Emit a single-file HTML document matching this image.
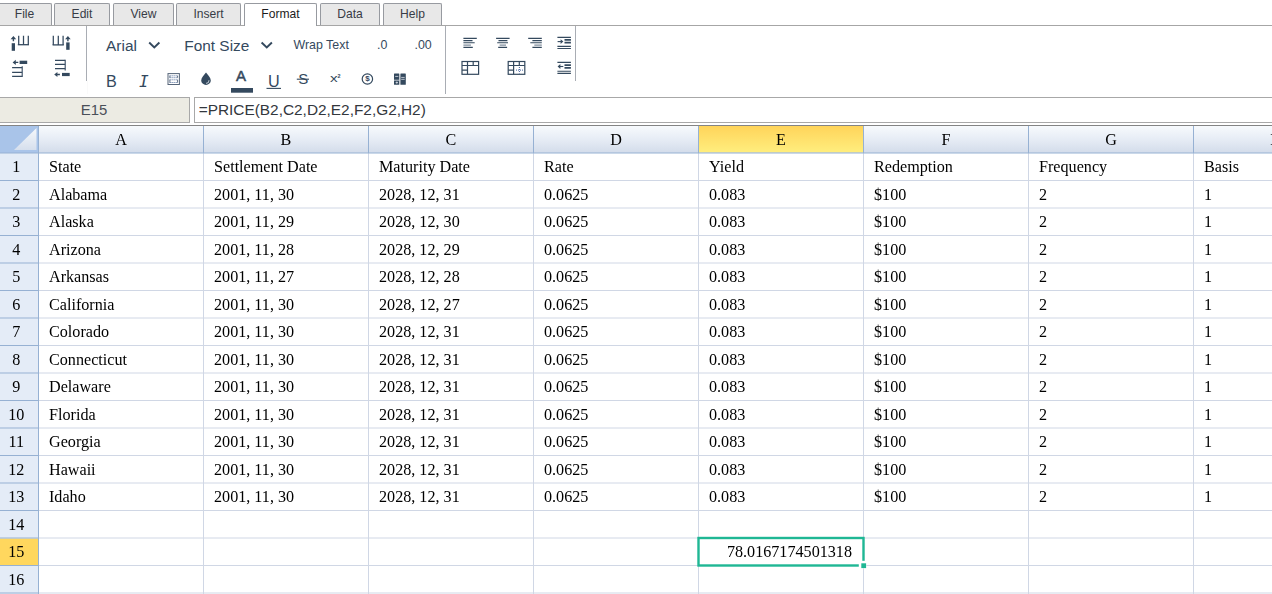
<!DOCTYPE html>
<html><head><meta charset="utf-8"><title>Spreadsheet</title>
<style>
html,body{margin:0;padding:0;background:#fff;}
body{width:1272px;height:594px;overflow:hidden;position:relative;font-family:"Liberation Sans",sans-serif;color:#34495e;}
.tab{position:absolute;top:3px;height:23px;box-sizing:border-box;border:1px solid #979aa0;border-bottom:none;border-radius:2px 2px 0 0;background:#e8e8e8;font-size:12.1px;line-height:20px;text-align:center;color:#383c46;}
.tab.on{background:#fff;color:#1c1c1c;z-index:2;}
.tabline{position:absolute;left:0;top:25px;width:1272px;height:1px;background:#a6a6a6;}
.sep{position:absolute;width:1px;background:#a9adb4;top:26px;}
.tx{position:absolute;white-space:pre;line-height:1;}
.ic{position:absolute;overflow:visible;}
.namebox{position:absolute;left:-2px;top:97px;width:192px;height:26px;box-sizing:border-box;border:1px solid #a8a8a8;background:#ecebe3;font-size:14.9px;text-align:center;line-height:24px;color:#4a4f58;}
.fx{position:absolute;left:194px;top:97px;width:1090px;height:26px;box-sizing:border-box;border:1px solid #a8a8a8;background:#fff;font-size:15.4px;line-height:24px;padding-left:3.7px;color:#33373d;white-space:pre;}
.grid{position:absolute;left:0;top:125px;will-change:transform;}
.grid .t{font-family:"Liberation Serif",serif;font-size:16.15px;fill:#000;}
</style></head><body>
<div class="tab" style="left:-3px;width:55px">File</div><div class="tab" style="left:54px;width:56px">Edit</div><div class="tab" style="left:113px;width:61px">View</div><div class="tab" style="left:176px;width:65px">Insert</div><div class="tab on" style="left:244px;width:73px">Format</div><div class="tab" style="left:320px;width:60px">Data</div><div class="tab" style="left:383px;width:59px">Help</div>
<div class="tabline"></div>
<div class="sep" style="left:86px;height:55px"></div>
<div class="sep" style="left:445px;height:68px"></div>
<div class="sep" style="left:575px;height:55px"></div>
<div class="sep" style="left:87px;top:81px;height:13px;background:#fafafa"></div>
<!-- toolbar text -->
<div class="tx" style="left:106.1px;top:37.8px;font-size:15.4px">Arial</div>
<div class="tx" style="left:184.3px;top:37.8px;font-size:15.4px">Font Size</div>
<div class="tx" style="left:293.5px;top:39px;font-size:12.4px">Wrap Text</div>
<div class="tx" style="left:377px;top:39px;font-size:12.4px">.0</div>
<div class="tx" style="left:414.5px;top:39px;font-size:12.4px">.00</div>
<div class="tx" style="left:106px;top:72.7px;font-size:16.2px">B</div>
<div class="tx" style="left:139px;top:74.1px;font-size:16.2px;font-family:'DejaVu Sans Mono',monospace;font-style:italic">I</div>
<div class="tx" style="left:236px;top:68.3px;font-size:15px;-webkit-text-stroke:0.5px #34495e">A</div>
<div class="tx" style="left:267.9px;top:72.7px;font-size:16.2px">U</div>
<div class="tx" style="left:298.3px;top:70.7px;font-size:15px">S</div>
<div class="tx" style="left:330px;top:72.3px;font-size:11.6px;transform:scaleX(1.32);transform-origin:0 0">x</div>
<div class="tx" style="left:337.4px;top:73.5px;font-size:5.4px;font-weight:bold">2</div>
<div class="tx" style="left:365.2px;top:75.3px;font-size:8px;font-weight:bold">$</div>
<svg class="ic" style="left:0;top:0" width="600" height="97" viewBox="0 0 600 97" fill="none" stroke="#34495e">
 <!-- group 1: row/col insert/delete icons -->
 <g stroke-width="1">
  <path d="M18.7 35.7V44.7M23.5 35.7V44.7M28.3 35.7V44.7" stroke="#34495e" stroke-width="1.25"/>
  <path d="M17.8 44.7H29" stroke-width="1.3"/>
  <path d="M53.3 35.7V44.9M58.3 35.7V44.9M63.1 35.7V44.9" stroke="#34495e" stroke-width="1.25"/>
  <path d="M52.6 44.9H63.8" stroke-width="1.3"/>
  <path d="M12.1 67.7H22.2M12.1 72.4H22.2M12.1 76.3H22.2" stroke-width="1.2"/>
  <path d="M22.2 66.3V76.9" stroke="#3d5167" stroke-width="1.15"/>
  <path d="M55 60.3H65.2M55 64.4H65.2M55 68.6H65.2" stroke-width="1.2"/>
  <path d="M65.2 59.8V70.6" stroke="#3d5167" stroke-width="1.15"/>
 </g>
 <g fill="#34495e" stroke="none">
  <rect x="11.7" y="43.2" width="3.3" height="7.6"/>
  <path d="M13.4 36 L16.2 39.2 H14.1 V41.2 H12.7 V39.2 H10.6 Z"/>
  <rect x="66.2" y="42.4" width="3.4" height="7.4"/>
  <path d="M67.9 36 L70.7 39.2 H68.6 V41.2 H67.2 V39.2 H65.1 Z"/>
  <rect x="19.6" y="60.7" width="7.6" height="3.3"/>
  <path d="M12.6 62.4 L15.8 59.8 V61.7 H18.3 V63.1 H15.8 V65 Z"/>
  <rect x="62" y="72.9" width="7.7" height="3.2"/>
  <path d="M54.2 74.5 L57.4 71.9 V73.8 H59.9 V75.2 H57.4 V77.1 Z"/>
 </g>
 <!-- chevrons -->
 <path d="M149.2 42.5L154.3 47.5L159.4 42.5" stroke-width="1.9"/>
 <path d="M261.6 42.5L266.75 47.5L271.9 42.5" stroke-width="1.9"/>
 <!-- border icon -->
 <rect x="168" y="73.6" width="11.4" height="10.9" stroke="#566579" stroke-width="1"/>
 <path d="M169.6 75.8H178M169.6 77.7H178M169.6 79.8H178M169.6 82.5H178" stroke="#4d6a9a" stroke-width="0.9" stroke-dasharray="1.1 0.9"/>
 <path d="M169.9 75.8V77.7M177.6 75.8V77.7M169.9 79.8V82.5M177.6 79.8V82.5" stroke="#53647a" stroke-width="0.9"/>
 <!-- drop -->
 <path d="M206 72.6C207.6 75 210.8 77.6 210.8 80.4A4.8 4.5 0 0 1 201.2 80.4C201.2 77.6 204.4 75 206 72.6Z" fill="#34495e" stroke="none"/>
 <path d="M206 83.4A3 3 0 0 0 209 80.2" stroke="#e8edf2" stroke-width="0.8"/>
 <!-- A colour bar -->
 <rect x="231" y="88" width="22" height="4.7" fill="#34495e" stroke="none"/>
 <!-- U underline -->
 <path d="M266.5 88.4H281" stroke-width="1.1"/>
 <!-- S strike -->
 <path d="M296.8 79.2H309" stroke-width="1.1"/>
 <!-- $ circle -->
 <circle cx="367.4" cy="79" r="5.2" stroke-width="1.2"/>
 <!-- table style icon -->
 <g fill="#34495e" stroke="none">
  <rect x="394" y="73.6" width="5.3" height="11.2" rx="0.5"/>
  <rect x="400.4" y="73.6" width="5.4" height="11.2" rx="0.5"/>
 </g>
 <path d="M395.2 76.4H398.3M401.2 77.4H404.7M401.2 79.3H404.7M395.6 82.6H398M396.8 81.5V83.7" stroke="#dfe5ec" stroke-width="0.8"/>
 <path d="M394 80.2H399.3" stroke="#fff" stroke-width="0.7"/>
 <!-- align left -->
 <g stroke-width="1.1">
  <path d="M463.4 38.4H476.8M463.4 40.6H472.5M463.4 42.7H474.7M463.4 47.4H472.8"/>
  <path d="M463.4 45.1H470.9" stroke="#6f7d8e"/>
  <path d="M496.1 38.4H509.6M498.5 40.6H507.4M497.2 42.7H508M498.2 47.4H507.1"/>
  <path d="M499.6 45.1H506" stroke="#6f7d8e"/>
  <path d="M528.2 38.4H541.8M532.4 40.6H541.8M530.3 42.7H541.8M532.4 47.4H541.8"/>
  <path d="M534.3 45.1H541.8" stroke="#6f7d8e"/>
 </g>
 <!-- indent increase -->
 <g stroke-width="1.1">
  <path d="M557.4 37.4H570.9M557.4 46.4H570.9M557.4 48.5H570.9"/>
  <path d="M564.5 39.9H570.9M564.5 42.6H570.9" stroke-width="1.7"/>
  <path d="M557.6 41.6H561.5"/>
  <path d="M557.4 62.4H570.9M557.4 71.2H570.9M557.4 73.4H570.9"/>
  <path d="M564.5 65.1H570.9M564.5 67.9H570.9" stroke-width="1.7"/>
  <path d="M559.5 66.5H563.3"/>
 </g>
 <path d="M563.4 41.6L560.6 39.2V44Z" fill="#34495e" stroke="none"/>
 <path d="M557.6 66.5L560.4 64.1V68.9Z" fill="#34495e" stroke="none"/>
 <!-- table icon 1 -->
 <g stroke-width="1.2">
  <rect x="462" y="61.5" width="16.6" height="12.8"/>
  <path d="M462 65.5H478.6M467.5 61.5V74.3M473.2 61.5V65.5M462 70.1H467.5"/>
  <rect x="508.2" y="61.5" width="16.6" height="12.8"/>
  <path d="M508.2 65.5H524.8M513.6 61.5V74.3M519.3 61.5V65.5M508.2 70.1H513.6"/>
  <path d="M516 70.1H523.4M519.4 67V73.4" stroke="#3f5f9a" stroke-width="1" stroke-dasharray="1 1"/>
 </g>
</svg>

<div class="namebox">E15</div>
<div class="fx">=PRICE(B2,C2,D2,E2,F2,G2,H2)</div>
<svg class="grid" width="1272" height="469" viewBox="0 125 1272 469">
<defs><linearGradient id="hg" x1="0" y1="0" x2="0" y2="1"><stop offset="0" stop-color="#f7fafd"/><stop offset="0.5" stop-color="#e6ecf5"/><stop offset="1" stop-color="#d3dcea"/></linearGradient><linearGradient id="sg" x1="0" y1="0" x2="0" y2="1"><stop offset="0" stop-color="#ffd45a"/><stop offset="1" stop-color="#ffee7e"/></linearGradient><linearGradient id="tg" x1="0" y1="0" x2="0" y2="1"><stop offset="0" stop-color="#f5f8fb"/><stop offset="1" stop-color="#d6dfed"/></linearGradient></defs>
<rect x="0" y="125" width="1272" height="469" fill="#fff"/>
<rect x="0" y="126" width="1272" height="27" fill="url(#hg)"/>
<rect x="699.0" y="126" width="164" height="26.5" fill="url(#sg)"/>
<rect x="0" y="153" width="38.5" height="441" fill="#e4ecf7"/>
<rect x="0" y="538.5" width="38.0" height="26.5" fill="#ffd75e"/>
<rect x="0" y="126" width="38.5" height="27" fill="#a9c4e9"/>
<path d="M36.5 128 L36.5 150 L14 150 Z" fill="url(#tg)"/>
<path d="M38.5 180.5H1272M38.5 208.0H1272M38.5 235.5H1272M38.5 263.0H1272M38.5 290.5H1272M38.5 318.0H1272M38.5 345.5H1272M38.5 373.0H1272M38.5 400.5H1272M38.5 428.0H1272M38.5 455.5H1272M38.5 483.0H1272M38.5 510.5H1272M38.5 538.0H1272M38.5 565.5H1272M38.5 593.0H1272M203.5 153V594M368.5 153V594M533.5 153V594M698.5 153V594M863.5 153V594M1028.5 153V594M1193.5 153V594" stroke="#d0d7e5" stroke-width="1" fill="none"/>
<path d="M0 153H1272M38.5 126V153M203.5 126V153M368.5 126V153M533.5 126V153M698.5 126V153M863.5 126V153M1028.5 126V153M1193.5 126V153M38.5 153V594M0 180.5H38.5M0 208.0H38.5M0 235.5H38.5M0 263.0H38.5M0 290.5H38.5M0 318.0H38.5M0 345.5H38.5M0 373.0H38.5M0 400.5H38.5M0 428.0H38.5M0 455.5H38.5M0 483.0H38.5M0 510.5H38.5M0 538.0H38.5M0 565.5H38.5M0 593.0H38.5" stroke="#96b1d3" stroke-width="1" fill="none"/>
<rect x="0" y="125" width="1272" height="1" fill="#848484"/>
<g class="t" text-anchor="middle">
<text x="121.0" y="145">A</text>
<text x="286.0" y="145">B</text>
<text x="451.0" y="145">C</text>
<text x="616.0" y="145">D</text>
<text x="781.0" y="145">E</text>
<text x="946.0" y="145">F</text>
<text x="1111.0" y="145">G</text>
<text x="1276.0" y="145">H</text>
<text x="16.3" y="172">1</text>
<text x="16.3" y="200">2</text>
<text x="16.3" y="227">3</text>
<text x="16.3" y="255">4</text>
<text x="16.3" y="282">5</text>
<text x="16.3" y="310">6</text>
<text x="16.3" y="337">7</text>
<text x="16.3" y="365">8</text>
<text x="16.3" y="392">9</text>
<text x="16.3" y="420">10</text>
<text x="16.3" y="447">11</text>
<text x="16.3" y="475">12</text>
<text x="16.3" y="502">13</text>
<text x="16.3" y="530">14</text>
<text x="16.3" y="557">15</text>
<text x="16.3" y="585">16</text>
</g>
<g class="t">
<text x="49.0" y="172">State</text>
<text x="214.0" y="172">Settlement Date</text>
<text x="379.0" y="172">Maturity Date</text>
<text x="544.0" y="172">Rate</text>
<text x="709.0" y="172">Yield</text>
<text x="874.0" y="172">Redemption</text>
<text x="1039.0" y="172">Frequency</text>
<text x="1204.0" y="172">Basis</text>
<text x="49.0" y="200">Alabama</text>
<text x="214.0" y="200">2001, 11, 30</text>
<text x="379.0" y="200">2028, 12, 31</text>
<text x="544.0" y="200">0.0625</text>
<text x="709.0" y="200">0.083</text>
<text x="874.0" y="200">$100</text>
<text x="1039.0" y="200">2</text>
<text x="1204.0" y="200">1</text>
<text x="49.0" y="227">Alaska</text>
<text x="214.0" y="227">2001, 11, 29</text>
<text x="379.0" y="227">2028, 12, 30</text>
<text x="544.0" y="227">0.0625</text>
<text x="709.0" y="227">0.083</text>
<text x="874.0" y="227">$100</text>
<text x="1039.0" y="227">2</text>
<text x="1204.0" y="227">1</text>
<text x="49.0" y="255">Arizona</text>
<text x="214.0" y="255">2001, 11, 28</text>
<text x="379.0" y="255">2028, 12, 29</text>
<text x="544.0" y="255">0.0625</text>
<text x="709.0" y="255">0.083</text>
<text x="874.0" y="255">$100</text>
<text x="1039.0" y="255">2</text>
<text x="1204.0" y="255">1</text>
<text x="49.0" y="282">Arkansas</text>
<text x="214.0" y="282">2001, 11, 27</text>
<text x="379.0" y="282">2028, 12, 28</text>
<text x="544.0" y="282">0.0625</text>
<text x="709.0" y="282">0.083</text>
<text x="874.0" y="282">$100</text>
<text x="1039.0" y="282">2</text>
<text x="1204.0" y="282">1</text>
<text x="49.0" y="310">California</text>
<text x="214.0" y="310">2001, 11, 30</text>
<text x="379.0" y="310">2028, 12, 27</text>
<text x="544.0" y="310">0.0625</text>
<text x="709.0" y="310">0.083</text>
<text x="874.0" y="310">$100</text>
<text x="1039.0" y="310">2</text>
<text x="1204.0" y="310">1</text>
<text x="49.0" y="337">Colorado</text>
<text x="214.0" y="337">2001, 11, 30</text>
<text x="379.0" y="337">2028, 12, 31</text>
<text x="544.0" y="337">0.0625</text>
<text x="709.0" y="337">0.083</text>
<text x="874.0" y="337">$100</text>
<text x="1039.0" y="337">2</text>
<text x="1204.0" y="337">1</text>
<text x="49.0" y="365">Connecticut</text>
<text x="214.0" y="365">2001, 11, 30</text>
<text x="379.0" y="365">2028, 12, 31</text>
<text x="544.0" y="365">0.0625</text>
<text x="709.0" y="365">0.083</text>
<text x="874.0" y="365">$100</text>
<text x="1039.0" y="365">2</text>
<text x="1204.0" y="365">1</text>
<text x="49.0" y="392">Delaware</text>
<text x="214.0" y="392">2001, 11, 30</text>
<text x="379.0" y="392">2028, 12, 31</text>
<text x="544.0" y="392">0.0625</text>
<text x="709.0" y="392">0.083</text>
<text x="874.0" y="392">$100</text>
<text x="1039.0" y="392">2</text>
<text x="1204.0" y="392">1</text>
<text x="49.0" y="420">Florida</text>
<text x="214.0" y="420">2001, 11, 30</text>
<text x="379.0" y="420">2028, 12, 31</text>
<text x="544.0" y="420">0.0625</text>
<text x="709.0" y="420">0.083</text>
<text x="874.0" y="420">$100</text>
<text x="1039.0" y="420">2</text>
<text x="1204.0" y="420">1</text>
<text x="49.0" y="447">Georgia</text>
<text x="214.0" y="447">2001, 11, 30</text>
<text x="379.0" y="447">2028, 12, 31</text>
<text x="544.0" y="447">0.0625</text>
<text x="709.0" y="447">0.083</text>
<text x="874.0" y="447">$100</text>
<text x="1039.0" y="447">2</text>
<text x="1204.0" y="447">1</text>
<text x="49.0" y="475">Hawaii</text>
<text x="214.0" y="475">2001, 11, 30</text>
<text x="379.0" y="475">2028, 12, 31</text>
<text x="544.0" y="475">0.0625</text>
<text x="709.0" y="475">0.083</text>
<text x="874.0" y="475">$100</text>
<text x="1039.0" y="475">2</text>
<text x="1204.0" y="475">1</text>
<text x="49.0" y="502">Idaho</text>
<text x="214.0" y="502">2001, 11, 30</text>
<text x="379.0" y="502">2028, 12, 31</text>
<text x="544.0" y="502">0.0625</text>
<text x="709.0" y="502">0.083</text>
<text x="874.0" y="502">$100</text>
<text x="1039.0" y="502">2</text>
<text x="1204.0" y="502">1</text>
<text x="852.0" y="557" text-anchor="end">78.0167174501318</text>
</g>
<rect x="698.5" y="538.0" width="165.0" height="27.5" fill="none" stroke="#1fb794" stroke-width="2.4"/>
<rect x="858.8" y="560.8" width="7.6" height="7.6" fill="#fff"/>
<rect x="861.3" y="563.3" width="4.8" height="4.8" fill="#1fb794"/>
</svg>
</body></html>
